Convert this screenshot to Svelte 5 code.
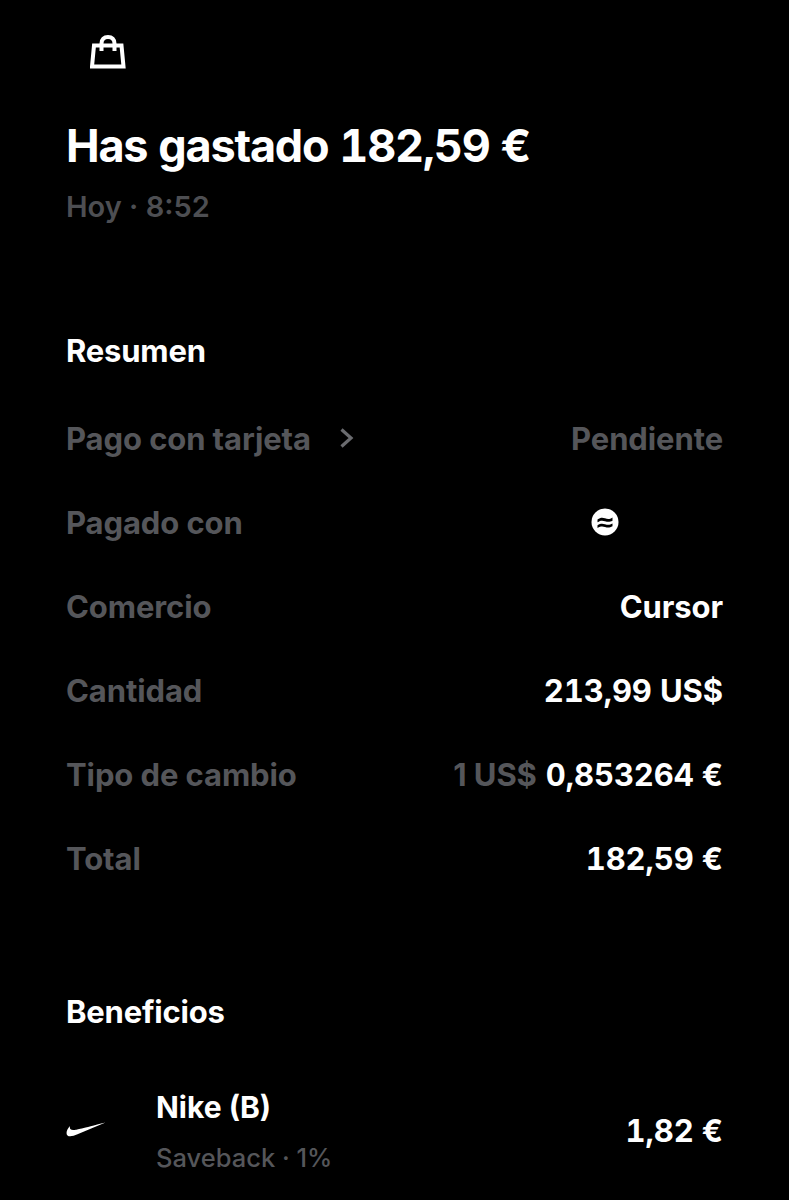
<script>
  const rows = [
    { label: 'Comercio', value: 'Cursor' },
    { label: 'Cantidad', value: '213,99 US$' },
    { label: 'Tipo de cambio', prefix: '1 US$', value: '0,853264 €' },
    { label: 'Total', value: '182,59 €' }
  ];
</script>

<main class="page">
  <svg class="bag" viewBox="0 0 36 34" width="36" height="34" fill="none" stroke="#fff" stroke-width="4">
    <path d="M4 10.500H31.500L33.500 31.500H2Z" stroke-linejoin="miter" />
    <path d="M11.500 16V8.500C11.500 4.500 14 2 18 2S24.500 4.500 24.500 8.500V16" />
  </svg>

  <h1>Has gastado 182,59 €</h1>
  <p class="time">Hoy · 8:52</p>

  <h2 class="resumen">Resumen</h2>

  <div class="rows">
    <div class="row">
      <span class="label link">
        Pago con tarjeta
        <svg viewBox="0 0 16 22" width="16" height="22" fill="none" stroke="#6a6b6f" stroke-width="3.200">
          <path d="M2.500 2.500L12 11L2.500 19.500" />
        </svg>
      </span>
      <span class="muted">Pendiente</span>
    </div>
    <div class="row">
      <span class="label">Pagado con</span>
      <span class="card-slot">
        <svg viewBox="0 0 28 28" width="28" height="28">
          <circle cx="14" cy="14" r="13.500" fill="#fff" />
          <path d="M6.500 11.500C9.500 9.300 11.500 9.500 14 10.300S18.500 11.500 21.500 9.500V12.800C18.500 14.300 16.500 14 14 13.200S9.500 12.300 6.500 14.300ZM6.500 17.300C9.500 15.300 11.500 15.500 14 16.200S18.500 17.300 21.500 15.500V18.300C18.500 20 16.500 19.700 14 19S9.500 18.200 6.500 20Z" fill="#000" />
        </svg>
      </span>
    </div>
    {#each rows as row}
      <div class="row">
        <span class="label">{row.label}</span>
        <span class="value">
          {#if row.prefix}<span class="muted prefix">{row.prefix}</span>{/if}{row.value}
        </span>
      </div>
    {/each}
  </div>

  <h2 class="beneficios">Beneficios</h2>

  <div class="benefit">
    <svg class="swoosh" viewBox="0 0 40 16" width="40" height="16">
      <path d="M39.500 0.500L11.500 12.300C7.500 14 3.500 15.200 1.500 13.500C-0.500 11.500 0.800 7.500 4 4C3.300 7 4.800 8.600 8.500 8C11.500 7.500 15 6.800 39.500 0.500Z" fill="#fff" />
    </svg>
    <div class="benefit-text">
      <span class="benefit-name">Nike (B)</span>
      <span class="benefit-sub">Saveback · 1%</span>
    </div>
    <span class="value">1,82 €</span>
  </div>
</main>

<style>
  :global(body) {
    margin: 0;
    background: #000;
  }

  .page {
    height: 1200px;
    box-sizing: border-box;
    overflow: hidden;
    padding: 35px 66px 0;
    background: #000;
    color: #fff;
    font-family: Inter, "Liberation Sans", sans-serif;
    -webkit-font-smoothing: antialiased;
  }

  .bag {
    display: block;
    margin-left: 24px;
  }

  h1 {
    margin: 52px 0 0;
    font-size: 45px;
    line-height: 50px;
    font-weight: 700;
    letter-spacing: -1.200px;
    font-variant-numeric: tabular-nums;
  }

  .time {
    margin: 18px 0 0;
    font-size: 29px;
    line-height: 36px;
    font-weight: 600;
    color: #4d4e52;
  }

  h2 {
    margin: 0;
    font-size: 31px;
    line-height: 36px;
    font-weight: 700;
    letter-spacing: -0.2px;
  }

  .resumen {
    margin-top: 108px;
  }

  .rows {
    display: flex;
    flex-direction: column;
    gap: 48px;
    margin-top: 51px;
  }

  .row {
    display: flex;
    justify-content: space-between;
    align-items: center;
    height: 36px;
    font-size: 31px;
    font-weight: 600;
  }

  .label,
  .muted {
    color: #55565a;
    font-weight: 700;
    letter-spacing: -0.1px;
  }

  .link {
    display: flex;
    align-items: center;
    gap: 28px;
  }

  .value {
    white-space: nowrap;
    font-weight: 700;
    font-size: 31px;
    font-variant-numeric: tabular-nums;
    letter-spacing: -0.1px;
  }

  .prefix {
    margin-right: 9px;
    font-variant-numeric: normal;
  }

  .card-slot {
    display: flex;
    margin-right: 104px;
  }

  .beneficios {
    margin-top: 118px;
  }

  .benefit {
    display: flex;
    align-items: center;
    margin-top: 59px;
  }

  .swoosh {
    flex: none;
    margin-top: -5px;
  }

  .benefit-text {
    display: flex;
    flex-direction: column;
    flex: 1;
    gap: 15px;
    margin-left: 50px;
  }

  .benefit-name {
    font-size: 30px;
    line-height: 36px;
    font-weight: 700;
  }

  .benefit-sub {
    font-size: 25.500px;
    line-height: 36px;
    font-weight: 500;
    color: #55565a;
  }

  .benefit > .value {
    margin-top: -4px;
  }
</style>
